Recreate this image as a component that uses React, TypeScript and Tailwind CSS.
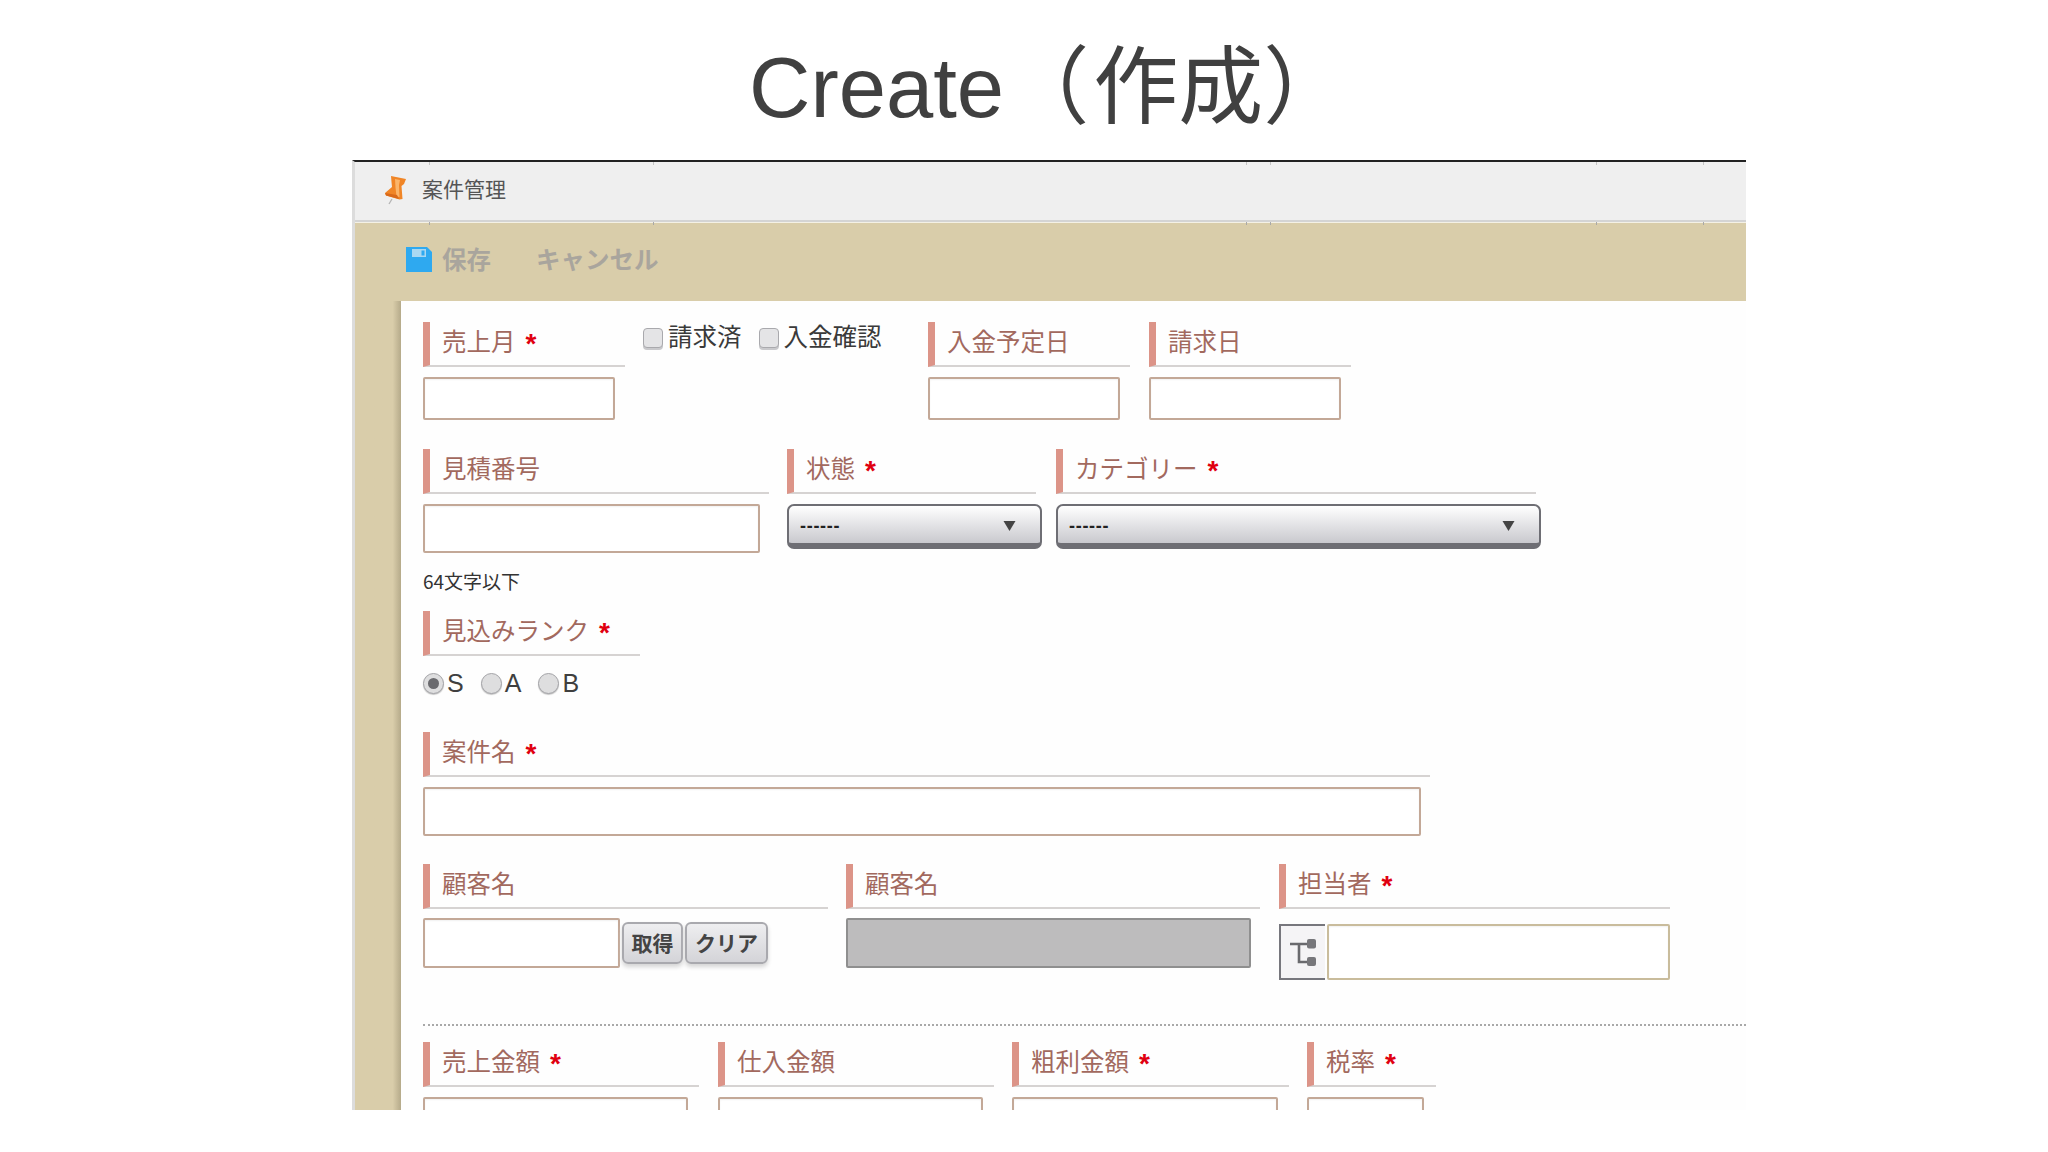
import type { ReactNode } from "react";

function Label({ text, required }: { text: string; required?: boolean }) {
  return (
    <div className="flex h-[45px] w-full border-b-2 border-l-[7px] border-b-[#d6d3d2] border-l-[#dc9488] pl-3">
      <span className="mt-[1px] text-[24.500px] leading-[36px] whitespace-nowrap text-[#a2695e]">{text}</span>
      {required && (
        <span className="mt-[5px] ml-[10px] font-['Liberation_Sans',sans-serif] text-[28px] leading-[34px] font-bold text-[#e00010]">*</span>
      )}
    </div>
  );
}

function Field({ text, required, className, children }: { text: string; required?: boolean; className: string; children?: ReactNode }) {
  return (
    <div className={`shrink-0 ${className}`}>
      <Label text={text} required={required} />
      <div className="pt-[10px]">{children}</div>
    </div>
  );
}

function TextInput({ className }: { className: string }) {
  return <input type="text" className={`block rounded-[2px] border-2 border-[#c3a897] bg-white shadow-[inset_0_1px_2px_rgba(0,0,0,0.06)] outline-none ${className}`} />;
}

function Check({ text }: { text: string }) {
  return (
    <label className="flex items-center gap-[5px] text-[24.500px] leading-[30px] whitespace-nowrap text-[#3a3a3a]">
      <input type="checkbox" className="h-[20px] w-[20px] appearance-none rounded-[4px] border border-[#a9a9ad] bg-[#e4e4e6] shadow-[0_2px_0_#c9c9cc]" />
      <span className="mb-[4px]">{text}</span>
    </label>
  );
}

function Radio({ text, checked }: { text: string; checked?: boolean }) {
  return (
    <label className="flex items-center gap-[3px] font-['Liberation_Sans',sans-serif] text-[25px] leading-[28px] text-[#3f3f3f]">
      <span className="flex h-[21px] w-[21px] items-center justify-center rounded-full border border-[#a4a4a8] bg-[#dededf] shadow-[0_1px_1px_#c4c4c4]">
        {checked && <span className="h-[11px] w-[11px] rounded-full bg-[#6a6a6e]" />}
      </span>
      {text}
    </label>
  );
}

function SelectBox({ className, arrow }: { className: string; arrow: string }) {
  return (
    <div className={`flex h-[45px] items-center rounded-[7px] border-2 border-b-[6px] border-[#6e6e74] bg-gradient-to-b from-white to-[#c9c9ce] pt-[3px] ${className}`}>
      <span className="ml-[11px] font-['Liberation_Sans',sans-serif] text-[18px] leading-none font-bold tracking-[0.7px] text-[#222]">------</span>
      <svg viewBox="0 0 12 10" className={`h-[10px] w-[13px] ${arrow}`}>
        <path d="M0 0h12L6 10z" fill="#444" />
      </svg>
    </div>
  );
}

function PinIcon() {
  return (
    <svg viewBox="0 0 23 30" className="h-[30px] w-[23px]">
      <path d="M8 24l-3 5" stroke="#b5b5b5" strokeWidth="1.300" />
      <path d="M7 1l15 3-2 5-2.500 2 1 13-3 .5L2 20.500 1 18l7-6-.500-5z" fill="#f08526" />
      <path d="M11 4l5 1-1 5 .500 12-3-.500-1-9z" fill="#fbb56a" />
      <path d="M1 18l1 2.500 13 3.500-2-4z" fill="#d9691a" />
    </svg>
  );
}

function SaveIcon() {
  return (
    <svg viewBox="0 0 26 25" className="h-[25px] w-[26px]">
      <path d="M0 0h21l5 5v20H0z" fill="#2ea9f0" />
      <path d="M6 2h14v8H6z" fill="#a9d8f2" />
      <path d="M15.500 3.500h3v5h-3z" fill="#2ea9f0" />
    </svg>
  );
}

function TreeIcon() {
  return (
    <svg viewBox="0 0 28 28" className="h-[28px] w-[28px]">
      <path d="M1 6h19M10 6v18h10" fill="none" stroke="#6a6a6e" strokeWidth="2.600" />
      <rect x="18" y="1" width="9" height="9.500" rx="2" fill="#77777b" />
      <rect x="18" y="19" width="9" height="9" rx="2" fill="#77777b" />
    </svg>
  );
}

// little scratch marks the screenshot shows on the title bar edges
const ticks = ["left-[74px]", "left-[298px]", "left-[891px]", "left-[915px]", "left-[1241px]", "left-[1348px]"];

export default function App() {
  return (
    <div className="h-[1152px] w-[2048px] overflow-hidden bg-white font-['Noto_Sans_CJK_JP',sans-serif]">
      <h1 className="h-[160px] pt-[40px] pl-[749px] font-['Liberation_Sans','Noto_Sans_CJK_JP',sans-serif] text-[85px] leading-[96px] font-normal whitespace-nowrap text-[#404040]">
        Create<span className="tracking-[4px]">（</span>作成）
      </h1>

      <div className="relative ml-[352px] flex h-[950px] w-[1394px] flex-col overflow-hidden border-t-2 border-l-[3px] border-t-[#222] border-l-[#dcdcdc] bg-[#d9cdaa]">
        {ticks.map((t) => (
          <span key={t} className={`absolute top-0 h-[3px] w-px bg-[#c4c4c4] ${t}`} />
        ))}
        {ticks.map((t) => (
          <span key={t} className={`absolute top-[60px] h-[3px] w-px bg-[#a8a8a8] ${t}`} />
        ))}

        <div className="flex h-[60px] shrink-0 items-center gap-[15px] border-b-2 border-[#d4d4d4] bg-[#efefef] pb-[3px] pl-[29px]">
          <PinIcon />
          <span className="mb-[2px] text-[21px] leading-none text-[#555]">案件管理</span>
        </div>

        <div className="flex h-[79px] shrink-0 items-center border-t border-[#f4f1e6] pb-[5px] pl-[51px] text-[24.500px] leading-none font-bold text-[#a9a59d]">
          <SaveIcon />
          <span className="ml-[10px]">保存</span>
          <span className="ml-[45px]">キャンセル</span>
        </div>

        <div className="flex min-h-0 flex-1">
          <div className="w-[46px] shrink-0 bg-gradient-to-r from-[#d9cdaa] from-[82%] to-[#b5aa8a]" />
          <div className="flex-1 bg-[#fefefe] pt-[21px] pl-[22px]">
            <div className="flex">
              <Field text="売上月" required className="w-[202px]">
                <TextInput className="h-[43px] w-[192px]" />
              </Field>
              <div className="ml-[18px] flex h-[30px] w-[285px] gap-[17px] pt-[2px]">
                <Check text="請求済" />
                <Check text="入金確認" />
              </div>
              <Field text="入金予定日" className="w-[202px]">
                <TextInput className="h-[43px] w-[192px]" />
              </Field>
              <Field text="請求日" className="ml-[19px] w-[202px]">
                <TextInput className="h-[43px] w-[192px]" />
              </Field>
            </div>

            <div className="mt-[29px] flex">
              <Field text="見積番号" className="w-[346px]">
                <TextInput className="h-[49px] w-[337px]" />
              </Field>
              <Field text="状態" required className="ml-[18px] w-[249px]">
                <SelectBox className="w-[255px]" arrow="ml-[163px]" />
              </Field>
              <Field text="カテゴリー" required className="ml-[20px] w-[480px]">
                <SelectBox className="w-[485px]" arrow="ml-[393px]" />
              </Field>
            </div>

            <p className="mt-[15px] text-[19px] leading-[26px] text-[#333]">64文字以下</p>

            <Field text="見込みランク" required className="mt-[17px] w-[217px]">
              <div className="mt-[3px] flex gap-[17px]">
                <Radio text="S" checked />
                <Radio text="A" />
                <Radio text="B" />
              </div>
            </Field>

            <Field text="案件名" required className="mt-[35px] w-[1007px]">
              <TextInput className="h-[49px] w-[998px]" />
            </Field>

            <div className="mt-[28px] flex">
              <Field text="顧客名" className="w-[405px]">
                <div className="-mt-px flex items-start">
                  <TextInput className="h-[50px] w-[197px]" />
                  <button className="mt-[4px] ml-[2px] h-[42px] w-[61px] rounded-[6px] border-2 border-[#a9a9ae] bg-gradient-to-b from-[#eeeef0] to-[#d4d4d8] pb-[2px] text-[21px] leading-none font-bold text-[#444] shadow-[0_3px_4px_#d5d5d5]">取得</button>
                  <button className="mt-[4px] ml-[2px] h-[42px] w-[83px] rounded-[6px] border-2 border-[#a9a9ae] bg-gradient-to-b from-[#eeeef0] to-[#d4d4d8] pb-[2px] text-[21px] leading-none font-bold text-[#444] shadow-[0_3px_4px_#d5d5d5]">クリア</button>
                </div>
              </Field>
              <Field text="顧客名" className="ml-[18px] w-[414px]">
                <input type="text" disabled className="-mt-px block h-[50px] w-[405px] rounded-[2px] border-2 border-[#8f8f8f] bg-[#bdbcbd]" />
              </Field>
              <Field text="担当者" required className="ml-[19px] w-[391px]">
                <div className="mt-[5px] flex">
                  <div className="flex h-[56px] w-[46px] items-center justify-center border-2 border-r-0 border-[#77777d] bg-[#f5f4f6]">
                    <TreeIcon />
                  </div>
                  <TextInput className="ml-[2px] h-[56px] w-[343px] border-[#c9bc9c]" />
                </div>
              </Field>
            </div>

            <div className="mt-[44px] border-t-2 border-dotted border-[#a9a9a9]" />

            <div className="mt-[16px] flex">
              <Field text="売上金額" required className="w-[276px]">
                <TextInput className="h-[49px] w-[265px]" />
              </Field>
              <Field text="仕入金額" className="ml-[19px] w-[276px]">
                <TextInput className="h-[49px] w-[265px]" />
              </Field>
              <Field text="粗利金額" required className="ml-[18px] w-[277px]">
                <TextInput className="h-[49px] w-[266px]" />
              </Field>
              <Field text="税率" required className="ml-[18px] w-[129px]">
                <TextInput className="h-[49px] w-[117px]" />
              </Field>
            </div>
          </div>
        </div>
      </div>
    </div>
  );
}
